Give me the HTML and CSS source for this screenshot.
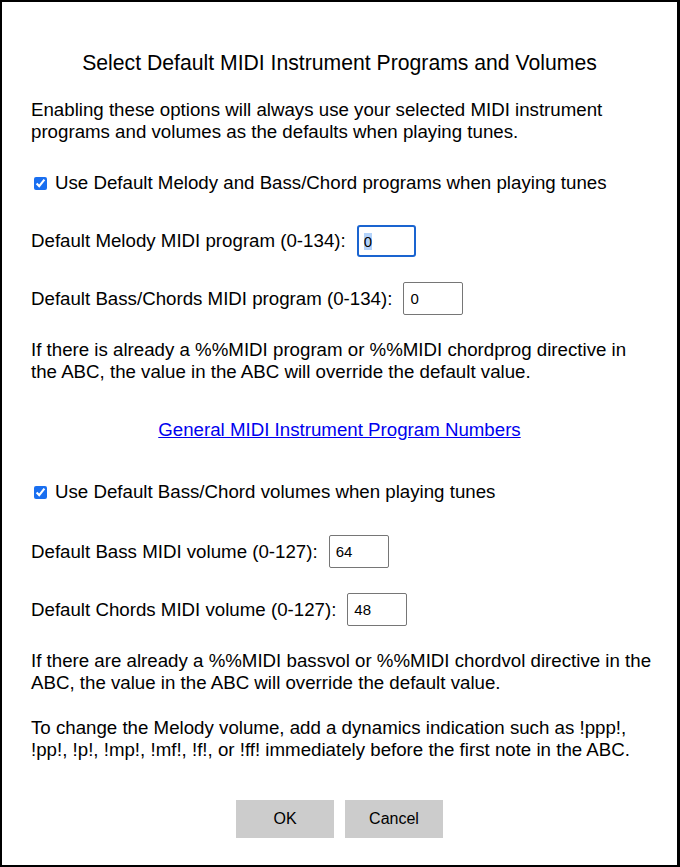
FILE: index.html
```html
<!DOCTYPE html>
<html>
<head>
<meta charset="utf-8">
<link rel="stylesheet" href="styles.css">
</head>
<body>
<div class="dialog">
  <h1 class="title">Select Default MIDI Instrument Programs and Volumes</h1>
  <p class="para p1">Enabling these options will always use your selected MIDI instrument programs and volumes as the defaults when playing tunes.</p>
  <label class="check c1"><input type="checkbox" checked> <span>Use Default Melody and Bass/Chord programs when playing tunes</span></label>
  <div class="row r1"><span>Default Melody MIDI program (0-134):</span><div class="field focused"><span class="sel">0</span></div></div>
  <div class="row r2"><span>Default Bass/Chords MIDI program (0-134):</span><input class="field" type="text" value="0"></div>
  <p class="para p2">If there is already a %%MIDI program or %%MIDI chordprog directive in the ABC, the value in the ABC will override the default value.</p>
  <p class="linkline"><a href="#">General MIDI Instrument Program Numbers</a></p>
  <label class="check c2"><input type="checkbox" checked> <span>Use Default Bass/Chord volumes when playing tunes</span></label>
  <div class="row r3"><span>Default Bass MIDI volume (0-127):</span><input class="field" type="text" value="64"></div>
  <div class="row r4"><span>Default Chords MIDI volume (0-127):</span><input class="field" type="text" value="48"></div>
  <p class="para p3">If there are already a %%MIDI bassvol or %%MIDI chordvol directive in the ABC, the value in the ABC will override the default value.</p>
  <p class="para p4">To change the Melody volume, add a dynamics indication such as !ppp!, !pp!, !p!, !mp!, !mf!, !f!, or !ff! immediately before the first note in the ABC.</p>
  <div class="buttons"><button class="btn">OK</button><button class="btn">Cancel</button></div>
</div>
</body>
</html>
```
FILE: styles.css
```css
html, body { margin: 0; padding: 0; }
body {
  background: #000;
  width: 680px;
  height: 867px;
  font-family: "Liberation Sans", Arial, sans-serif;
  color: #000;
}
.dialog {
  position: relative;
  top: 2px; left: 2px;
  width: 675px;
  height: 863px;
  background: #fff;
  box-sizing: border-box;
  padding: 0 23px 0 29px;
  display: flex;
  flex-direction: column;
  font-size: 18.7px;
  line-height: 22px;
}
.title {
  font-size: 21.2px;
  font-weight: normal;
  text-align: center;
  line-height: 22px;
  margin: 50px 0 0 0;
  padding-right: 6px;
}
.para { margin: 0; }
.p1 { margin-top: 25px; }
.check { display: flex; align-items: center; margin-top: 29px; }
.check input {
  width: 13px; height: 13px;
  margin: 0 8px 0 3px;
  accent-color: #1a6ff0;
  flex: none;
}
.check span { white-space: nowrap; }
.c2 { margin-top: 40px; }
.row { display: flex; align-items: center; gap: 11px; }
.r1 { margin-top: 31px; }
.r2 { margin-top: 25px; }
.r3 { margin-top: 32px; }
.r4 { margin-top: 25px; }
.field {
  box-sizing: border-box;
  width: 60px;
  height: 33px;
  border: 1px solid #767676;
  border-radius: 2px;
  font-family: "Liberation Sans", Arial, sans-serif;
  font-size: 15px;
  padding: 0 6px;
  background: #fff;
  color: #000;
  outline: none;
  flex: none;
}
.field.focused {
  width: 59px;
  height: 32px;
  border: 2px solid #1a64d0;
  border-radius: 3px;
  padding: 0 5px;
  display: flex;
  align-items: center;
}
.sel { background: #b4d3fa; line-height: 17px; }
.p2 { margin-top: 24px; }
.linkline { margin: 36px 6px 0 0; text-align: center; }
.linkline a { color: #0000ee; text-decoration: underline; }
.p3 { margin-top: 24px; }
.p4 { margin-top: 23px; }
.buttons { display: flex; justify-content: center; gap: 11px; margin-top: 39px; padding-right: 6px; }
.btn {
  width: 98px; height: 38px;
  border: none;
  background: #cccccc;
  font-family: "Liberation Sans", Arial, sans-serif;
  font-size: 16px;
  color: #000;
  padding: 0;
}
```
